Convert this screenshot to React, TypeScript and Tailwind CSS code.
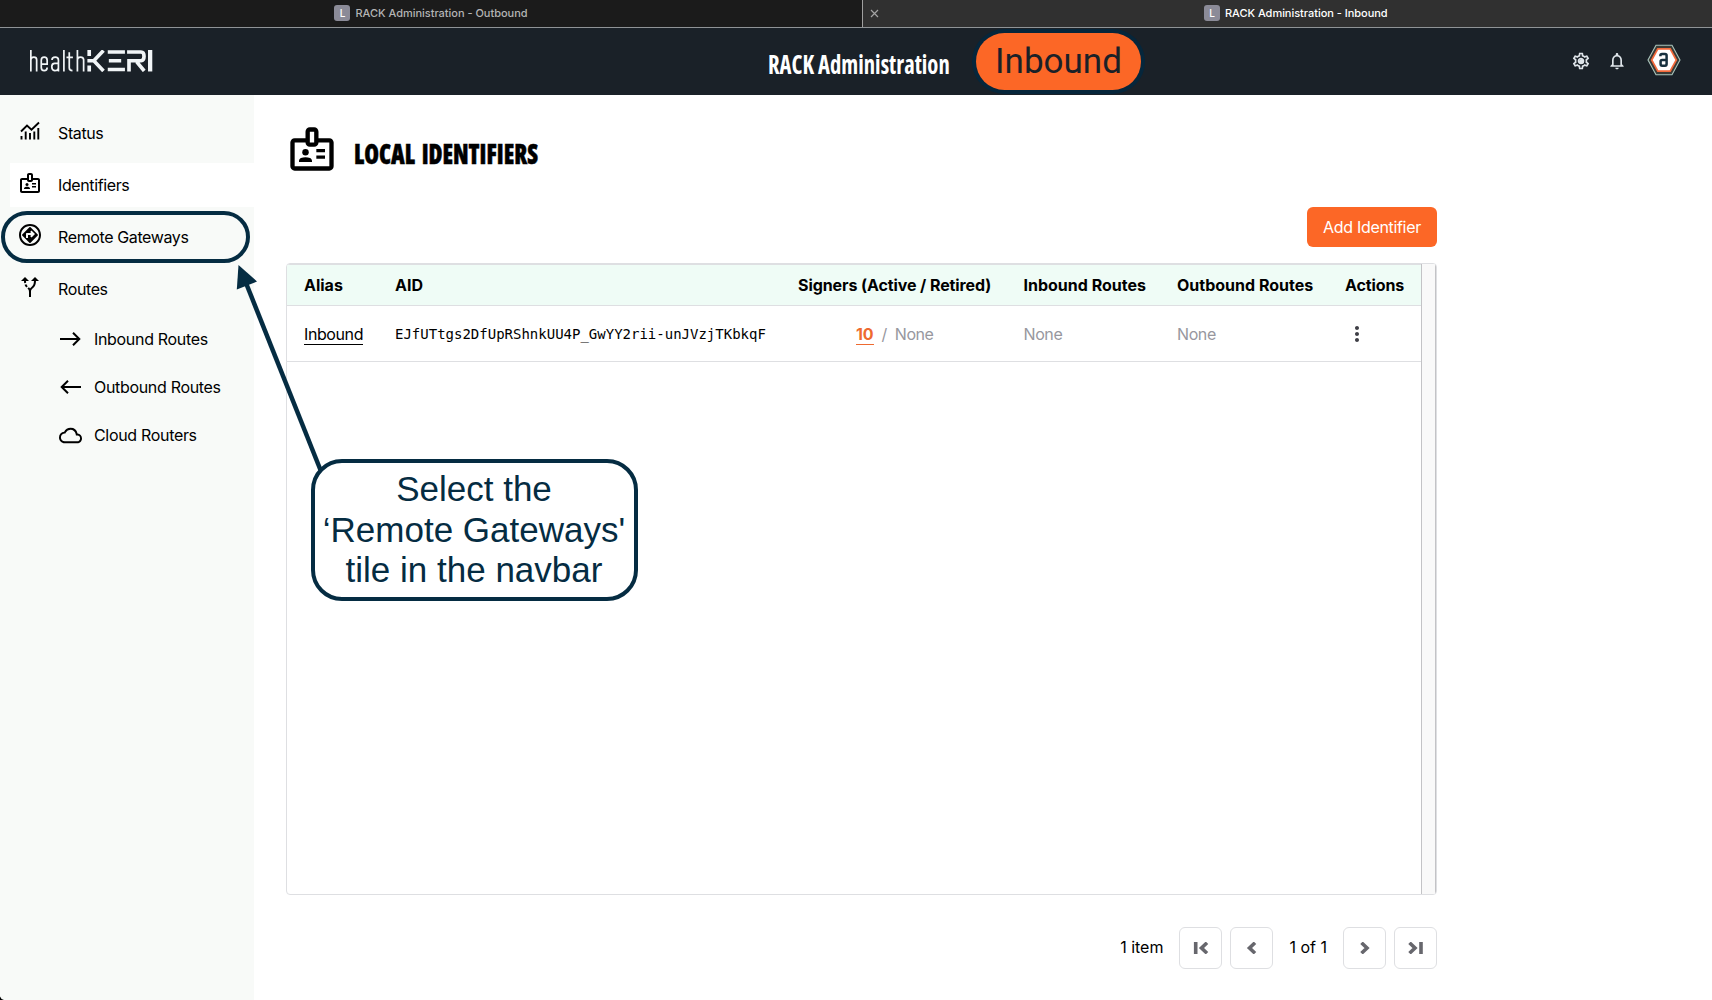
import type { ReactNode } from "react";
import {
  MdAltRoute,
  MdMoreVert,
  MdNotificationsNone,
  MdOutlineAssistantDirection,
  MdOutlineBadge,
  MdOutlineCloud,
  MdOutlineSettings,
} from "react-icons/md";

function BrowserTab({ title, className }: { title: string; className: string }) {
  return (
    <div className={`flex items-center text-[11px] font-medium ${className}`}>
      <span className="mr-[5px] flex size-4 items-center justify-center rounded-[3px] bg-[#8b8b98] pt-px text-[10px] text-white">
        L
      </span>
      <span className="whitespace-nowrap">{title}</span>
    </div>
  );
}

function TabBar() {
  return (
    <div className="flex h-7 shrink-0 border-b border-[#8f9396] bg-[#1b1b1b]">
      <div className="flex w-[863px] justify-center border-r border-[#a0a0a0] pb-px">
        <BrowserTab title="RACK Administration - Outbound" className="tracking-[-0.02px] text-[#b4b4b4]" />
      </div>
      <div className="flex flex-1 items-center bg-[#303030] pb-px">
        <svg className="ml-[7px] size-[9px]" viewBox="0 0 9 9" stroke="#a3a3a3" strokeWidth="1.2">
          <path d="M1 1l7 7M8 1L1 8" />
        </svg>
        <BrowserTab title="RACK Administration - Inbound" className="ml-[325px] tracking-[-0.03px] text-white" />
      </div>
    </div>
  );
}

function Logo() {
  return (
    <svg className="ml-[30px] h-[21.5px] w-[122.5px]" viewBox="1 1 114.200 20" fill="none" stroke="#f1f5f7">
      <g strokeWidth="1.600">
        <path d="M1.800 1v20M1.800 10Q2 7.600 4.600 7.600T7.200 10v11" />
        <path d="M11.500 14.200h5.500V10.500q0-2.900-2.750-2.900t-2.750 2.900v6.700q0 3 2.750 3t2.750-3" />
        <path d="M21.500 10.200q0-2.600 3-2.600t3 2.600V21M27.500 13.400H24q-2.700 0-2.700 3.200t2.700 3.600q3.500 0 3.500-3" />
        <path d="M32.600 1v20M37.600 3v14.500q0 2.700 3 2.700M35 7.800h6" />
        <path d="M45.200 1v20M45.200 10q.2-2.400 2.900-2.400T51 10v11" />
      </g>
      <g strokeWidth="3.400">
        <path d="M56.200 1v5.500M56.200 15.500V21" />
        <path d="M54.500 11h6L69.500 1.500M60.500 11l9 9.500" />
        <path d="M73.500 2.800H89.500M74.500 11H86M73.500 19.200H89.500" />
        <path d="M91.500 2.800h13q2.800 0 2.800 4t-2.800 4.200H93.300V21M100.500 12l7 8.500" />
        <path d="M113 1v20" strokeWidth="4" />
      </g>
    </svg>
  );
}

function Avatar() {
  return (
    <svg className="size-[34px]" viewBox="0 0 34 34" fill="none">
      <path d="M9 2.200h16L33 17l-8 14.800H9L1 17z" fill="#3a3a35" stroke="#a9c6bd" strokeWidth="1.100" />
      <path d="M10.300 5h13.400L30.300 17l-6.600 12H10.300L3.700 17z" fill="#f4693a" />
      <path d="M11.300 6.800h11.400L28.300 17l-5.600 10.200H11.300L5.700 17z" fill="#fff" />
      <path
        d="M13.400 13.200v-.7q0-1.600 1.600-1.600h3q1.600 0 1.600 1.600v8.600q0 1.600-1.600 1.600h-2.800q-1.600 0-1.600-1.600v-2.600q0-1.600 1.600-1.600h4.400"
        stroke="#17303f"
        strokeWidth="2.500"
      />
    </svg>
  );
}

function Header() {
  return (
    <header className="flex h-[67px] shrink-0 items-center bg-[#1a2128]">
      <div className="flex w-[768px] shrink-0 items-center pb-px">
        <Logo />
      </div>
      <h1 className="w-[182px] origin-left scale-x-[0.871] pt-1 font-['Open_Sans'] text-[26px] leading-8 font-bold whitespace-nowrap text-white [font-stretch:75%]">
        RACK Administration
      </h1>
      <div className="ml-[26px] flex h-[57px] w-[165px] items-center justify-center rounded-full bg-[#fc6726] pt-px font-['Roboto'] text-[35px] text-[#1a2128] shadow-[0_0_0_4px_#06263b]">
        Inbound
      </div>
      <div className="flex flex-1 items-center justify-end pr-[31px] pb-[3px]">
        <span className="relative mt-0.5 flex size-5 items-center justify-center text-[#dfe5ea]">
          <MdOutlineSettings className="size-5" />
          <span className="absolute size-[5px] rounded-full bg-[#dfe5ea]" />
        </span>
        <MdNotificationsNone className="mt-0.5 ml-4 size-5 text-[#dfe5ea]" />
        <span className="ml-5">
          <Avatar />
        </span>
      </div>
    </header>
  );
}

function MonitoringIcon() {
  return (
    <svg className="size-5" viewBox="0 0 20 20" fill="none" stroke="currentColor" strokeWidth="1.900">
      <path d="M1.500 18.500v-3.500M5.700 18.500v-8M10 18.500v-6.500M14.300 18.500v-8M18.300 18.500V7" />
      <path d="M1 10.500l6-6 4.500 4.200L19 1.500" />
    </svg>
  );
}

function ArrowIcon({ flip }: { flip?: boolean }) {
  return (
    <svg
      className={flip ? "w-[21px] rotate-180" : "w-[21px]"}
      viewBox="0 0 21 14"
      fill="none"
      stroke="currentColor"
      strokeWidth="2"
    >
      <path d="M0 7h19.500M13 .8L19.300 7 13 13.200" />
    </svg>
  );
}

function NavItem({ icon, label, active }: { icon: ReactNode; label: string; active?: boolean }) {
  return (
    <div className={`ml-[10px] flex h-11 items-center ${active ? "bg-white" : ""}`}>
      <span className="ml-2 flex w-6 justify-center pb-1">{icon}</span>
      <span className="ml-4 tracking-[-0.38px]">{label}</span>
    </div>
  );
}

function SubItem({ icon, label }: { icon: ReactNode; label: string }) {
  return (
    <div className="flex h-12 items-center pl-[58px]">
      <span className="flex w-6 justify-center">{icon}</span>
      <span className="ml-3 tracking-[-0.32px]">{label}</span>
    </div>
  );
}

function Sidebar() {
  return (
    <nav className="w-[254px] shrink-0 bg-[#f8faf8] pt-4">
      <div className="flex flex-col gap-2">
        <NavItem icon={<MonitoringIcon />} label="Status" />
        <NavItem icon={<MdOutlineBadge className="size-6" />} label="Identifiers" active />
        <NavItem icon={<MdOutlineAssistantDirection className="size-6" />} label="Remote Gateways" />
        <NavItem icon={<MdAltRoute className="size-6" />} label="Routes" />
      </div>
      <div className="pt-1">
        <SubItem icon={<ArrowIcon />} label="Inbound Routes" />
        <SubItem icon={<ArrowIcon flip />} label="Outbound Routes" />
        <SubItem icon={<MdOutlineCloud className="size-[23px]" />} label="Cloud Routers" />
      </div>
    </nav>
  );
}

const columns = "grid grid-cols-[91px_403px_225.5px_153.5px_168px_1fr] items-center pl-[17px]";

function IdentifierTable() {
  return (
    <div className="mt-4 flex h-[632px] w-[1151px] overflow-hidden rounded-[4px] border border-[#dedfe2]">
      <div className="flex-1">
        <div className={`${columns} h-[42px] border-t border-b border-[#dedfe2] bg-[#effcf6] font-bold`}>
          <span>Alias</span>
          <span>AID</span>
          <span className="tracking-[-0.09px]">Signers (Active / Retired)</span>
          <span>Inbound Routes</span>
          <span>Outbound Routes</span>
          <span className="tracking-[-0.1px]">Actions</span>
        </div>
        <div className={`${columns} h-14 border-b border-[#dedfe2] text-[#97979e]`}>
          <span className="mt-0.5 justify-self-start border-b border-black leading-5 tracking-[-0.4px] text-black">
            Inbound
          </span>
          <span className="pt-0.5 font-['DejaVu_Sans_Mono'] text-[14px] text-black">
            EJfUTtgs2DfUpRShnkUU4P_GwYY2rii-unJVzjTKbkqF
          </span>
          <span className="flex items-center gap-2 pl-[58px] tracking-[-0.45px]">
            <span className="mt-0.5 border-b border-[#ee6a30] leading-5 font-bold tracking-[-0.1px] text-[#ee6a30]">
              10
            </span>
            <span>/</span>
            <span>None</span>
          </span>
          <span className="tracking-[-0.4px]">None</span>
          <span className="tracking-[-0.4px]">None</span>
          <MdMoreVert className="-ml-[0.5px] size-6 text-[#3f3f46]" />
        </div>
      </div>
      <div className="w-[15px] border-x border-[#c3c3c6] bg-[#f9f9f9]" />
    </div>
  );
}

function PageButton({ d, className = "" }: { d: string; className?: string }) {
  return (
    <button
      className={`flex h-[42px] w-[43px] items-center justify-center rounded-[6px] border border-[#dedfe2] ${className}`}
    >
      <svg className="h-3 w-4" viewBox="0 0 16 12" fill="none" stroke="#67676d" strokeWidth="3.600">
        <path d={d} />
      </svg>
    </button>
  );
}

function Pagination() {
  return (
    <div className="mt-8 flex w-[1151px] items-center justify-end">
      <span className="mr-4 pb-0.5">1 item</span>
      <PageButton d="M2.700 0v12M14 .8L8.500 6l5.500 5.200" />
      <PageButton d="M11 .8L5.500 6l5.500 5.200" className="ml-2" />
      <span className="mx-4 pb-0.5 text-center">1 of 1</span>
      <PageButton d="M4.500 .8L10 6l-5.500 5.200" />
      <PageButton d="M1.500 .8L7 6l-5.500 5.200M13 0v12" className="ml-2" />
    </div>
  );
}

function Callout() {
  return (
    <>
      <div className="absolute top-[211px] left-px h-[52px] w-[249px] rounded-[26px] border-4 border-[#052c42]" />
      <svg className="absolute top-[260px] left-[230px] h-[220px] w-[100px]" viewBox="230 260 100 220">
        <path d="M246 283L320.500 470" stroke="#052c42" strokeWidth="4.500" />
        <path d="M238.500 265L257 281.500 236.800 289.500z" fill="#052c42" />
      </svg>
      <div className="absolute top-[459px] left-[311px] flex h-[142px] w-[327px] flex-col items-center justify-center rounded-[31px] border-4 border-[#052c42] bg-white pr-px font-['Liberation_Sans'] text-[35px] leading-[40.5px] whitespace-nowrap text-[#052c42]">
        <span>Select the</span>
        <span>‘Remote Gateways'</span>
        <span>tile in the navbar</span>
      </div>
    </>
  );
}

export default function App() {
  return (
    <div className="relative flex h-[1000px] w-[1712px] flex-col overflow-hidden bg-white font-['Inter',sans-serif] text-base text-black">
      <TabBar />
      <Header />
      <div className="flex flex-1">
        <Sidebar />
        <main className="flex-1 pt-[30px] pl-8">
          <div className="flex h-[52px] items-center">
            <MdOutlineBadge className="-mt-1 size-[52px]" />
            <h2 className="ml-4 origin-left scale-x-[0.85] pt-1 font-['Open_Sans'] text-[28px] leading-9 font-extrabold whitespace-nowrap [-webkit-text-stroke:0.5px] [font-stretch:75%] [word-spacing:3px]">
              LOCAL IDENTIFIERS
            </h2>
          </div>
          <div className="mt-[30px] flex w-[1151px] justify-end">
            <button className="h-10 w-[130px] rounded-[6px] bg-[#fc6726] tracking-[-0.32px] text-white">
              Add Identifier
            </button>
          </div>
          <IdentifierTable />
          <Pagination />
        </main>
      </div>
      <Callout />
      <svg className="absolute bottom-0 left-0 size-1" viewBox="0 0 4 4">
        <path d="M0 0.500Q1 3.500 4 4H0z" />
      </svg>
    </div>
  );
}
